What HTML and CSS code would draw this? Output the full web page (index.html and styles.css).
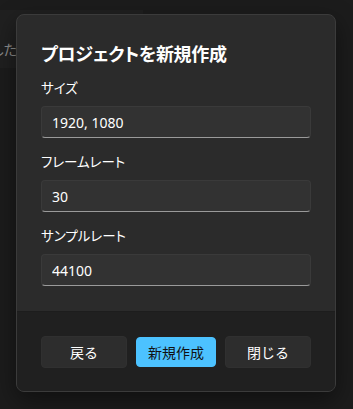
FILE: index.html
```html
<!DOCTYPE html>
<html lang="ja">
<head>
    <meta charset="UTF-8">
    <meta name="viewport" content="width=device-width, initial-scale=1.0">
    <title>プロジェクトを新規作成</title>
    <link rel="stylesheet" href="styles.css">
</head>
<body>
    <div class="behind">
        <span class="behind-text">保存しました</span>
    </div>

    <div class="dialog">
        <div class="dialog-body">
            <h1 class="dialog-title">プロジェクトを新規作成</h1>

            <label class="field-label" for="size">サイズ</label>
            <input class="field" id="size" type="text" value="1920, 1080">

            <label class="field-label" for="fps">フレームレート</label>
            <input class="field" id="fps" type="text" value="30">

            <label class="field-label" for="rate">サンプルレート</label>
            <input class="field" id="rate" type="text" value="44100">
        </div>

        <div class="dialog-footer">
            <button class="btn">戻る</button>
            <button class="btn btn-primary">新規作成</button>
            <button class="btn">閉じる</button>
        </div>
    </div>
</body>
</html>
```

FILE: styles.css
```css
/* Base */
body {
    margin: 0;
    width: 353px;
    height: 409px;
    overflow: hidden;
    background-color: #1c1c1c;
    color: #fff;
    font-family: "Noto Sans", "Noto Sans CJK JP", sans-serif;
    font-feature-settings: "palt";
}

/* Window underneath the dialog */
.behind {
    margin-top: 10px;
    width: 143px;
    height: 58px;
    background-color: #202020;
    overflow: hidden;
    box-sizing: border-box;
    padding-top: 30px;
}
.behind-text {
    display: block;
    margin-left: -61px;
    font-size: 14px;
    line-height: 20px;
    color: #8c8c8c;
    white-space: nowrap;
}

/* Dialog */
.dialog {
    position: absolute;
    left: 16px;
    top: 14px;
    width: 320px;
    height: 378px;
    box-sizing: border-box;
    display: flex;
    flex-direction: column;
    background-color: #2b2b2b;
    border: 1px solid #3b3b3b;
    border-radius: 8px;
    overflow: hidden;
    box-shadow: 0 8px 24px rgba(0, 0, 0, 0.45);
}
.dialog-body {
    flex: 1;
    display: flex;
    flex-direction: column;
    padding: 25px 24px 0 24px;
}
.dialog-title {
    margin: 0 0 10px 0;
    font-size: 18px;
    line-height: 28px;
    font-weight: 700;
    letter-spacing: -0.3px;
}
.field-label {
    font-size: 13.5px;
    line-height: 20px;
    margin-bottom: 8px;
}
.field {
    height: 32px;
    box-sizing: border-box;
    margin: 0 0 14px 0;
    padding: 0 10px;
    background-color: #323232;
    color: #fff;
    border: 1px solid #3a3a3a;
    border-bottom-color: #9a9a9a;
    border-radius: 4px;
    font-family: inherit;
    font-size: 14px;
    outline: none;
}

/* Footer buttons */
.dialog-footer {
    height: 80px;
    flex-shrink: 0;
    box-sizing: border-box;
    display: flex;
    align-items: center;
    gap: 9px;
    padding: 0 24px;
    background-color: #202020;
    border-top: 1px solid #1d1d1d;
}
.btn {
    width: 86px;
    height: 32px;
    padding: 0;
    background-color: #2d2d2d;
    color: #fff;
    border: 1px solid #303030;
    border-radius: 4px;
    font-family: inherit;
    font-size: 14px;
    cursor: pointer;
}
.btn-primary {
    width: 80px;
    height: 30px;
    background-color: #4cc2ff;
    border-color: #4cc2ff;
    color: #111;
}
```
